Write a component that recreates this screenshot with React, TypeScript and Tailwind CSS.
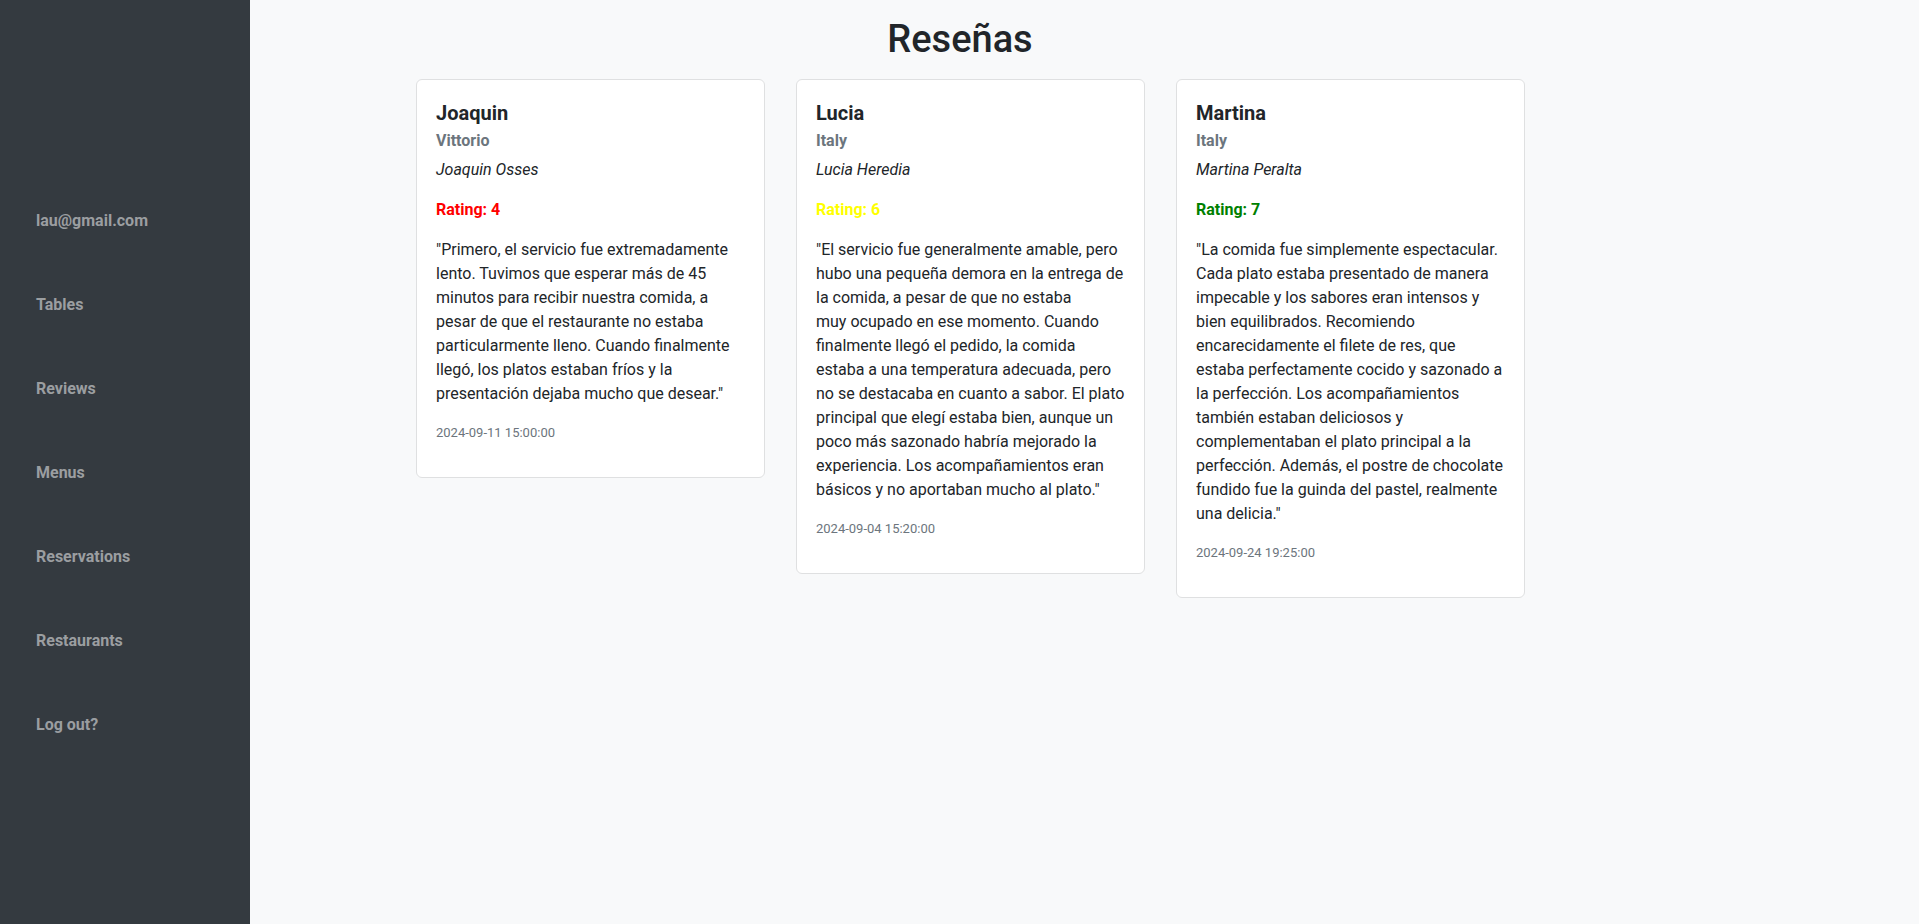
import React from "react";

interface Review {
  name: string;
  restaurant: string;
  author: string;
  rating: number;
  comment: string;
  date: string;
}

const reviews: Review[] = [
  {
    name: "Joaquin",
    restaurant: "Vittorio",
    author: "Joaquin Osses",
    rating: 4,
    comment:
      "\"Primero, el servicio fue extremadamente lento. Tuvimos que esperar más de 45 minutos para recibir nuestra comida, a pesar de que el restaurante no estaba particularmente lleno. Cuando finalmente llegó, los platos estaban fríos y la presentación dejaba mucho que desear.\"",
    date: "2024-09-11 15:00:00",
  },
  {
    name: "Lucia",
    restaurant: "Italy",
    author: "Lucia Heredia",
    rating: 6,
    comment:
      "\"El servicio fue generalmente amable, pero hubo una pequeña demora en la entrega de la comida, a pesar de que no estaba muy\u00a0ocupado en ese momento. Cuando finalmente llegó el pedido, la comida estaba a una temperatura adecuada, pero no se destacaba en cuanto a sabor. El plato principal que elegí estaba bien, aunque un poco más sazonado habría mejorado la experiencia. Los acompañamientos eran básicos y no aportaban mucho al plato.\"",
    date: "2024-09-04 15:20:00",
  },
  {
    name: "Martina",
    restaurant: "Italy",
    author: "Martina Peralta",
    rating: 7,
    comment:
      "\"La comida fue simplemente espectacular. Cada plato estaba presentado de manera impecable y los sabores eran intensos y bien equilibrados. Recomiendo encarecidamente el filete de res, que estaba perfectamente cocido y sazonado a la perfección. Los acompañamientos también estaban deliciosos y complementaban el plato principal a la perfección. Además, el postre de chocolate fundido fue la guinda del pastel, realmente una delicia.\"",
    date: "2024-09-24 19:25:00",
  },
];

const navItems = ["lau@gmail.com", "Tables", "Reviews", "Menus", "Reservations", "Restaurants", "Log out?"];

// rating colour like the original: low red, mid yellow, high green
function ratingClass(r: number) {
  if (r < 5) return "text-[#ff0000]";
  if (r < 7) return "text-[#ffff00]";
  return "text-[#008000]";
}

const ReviewCard = ({ review }: { review: Review }) => (
  <div className="self-start rounded-[6px] border border-[#dfe0e1] bg-white px-[19px] pt-[21px] pb-[35px]">
    <h5 className="text-[20px] leading-[24px] font-bold text-[#212529]">{review.name}</h5>
    <h6 className="mt-[6px] text-[16px] leading-[19px] font-bold text-[#6c757d]">{review.restaurant}</h6>
    <p className="mt-2 text-[16px] leading-[24px] italic text-[#212529]">{review.author}</p>
    <p className={`mt-4 text-[16px] leading-[24px] font-bold ${ratingClass(review.rating)}`}>
      Rating: {review.rating}
    </p>
    <p className="mt-4 text-[16px] leading-[24px] text-[#212529]">{review.comment}</p>
    <p className="mt-[18px] text-[13px] leading-[18px] text-[#6c757d]">{review.date}</p>
  </div>
);

export default function App() {
  return (
    <div
      className="flex h-[924px] w-full bg-[#f8f9fa]"
      style={{ fontFamily: "Roboto, 'Noto Sans', sans-serif" }}
    >
      {/* Sidebar */}
      <aside className="w-[250px] shrink-0 bg-[#343a40] pt-[179px]">
        <nav className="flex flex-col">
          {navItems.map((item) => (
            <a
              key={item}
              href="#"
              className="flex h-[84px] items-center pl-[36px] text-[16px] font-bold text-[#9b9ea1]"
            >
              {item}
            </a>
          ))}
        </nav>
      </aside>

      {/* Content */}
      <main className="flex-1">
        <div className="ml-[140px] w-[1140px]">
          <h1 className="mt-[15px] text-center text-[38px] leading-[48px] font-medium text-[#212529]">
            Reseñas
          </h1>
          <div className="mt-[16px] grid grid-cols-[349px_349px_349px] gap-[31px] pl-[26px]">
            {reviews.map((r) => (
              <ReviewCard key={r.name} review={r} />
            ))}
          </div>
        </div>
      </main>
    </div>
  );
}
